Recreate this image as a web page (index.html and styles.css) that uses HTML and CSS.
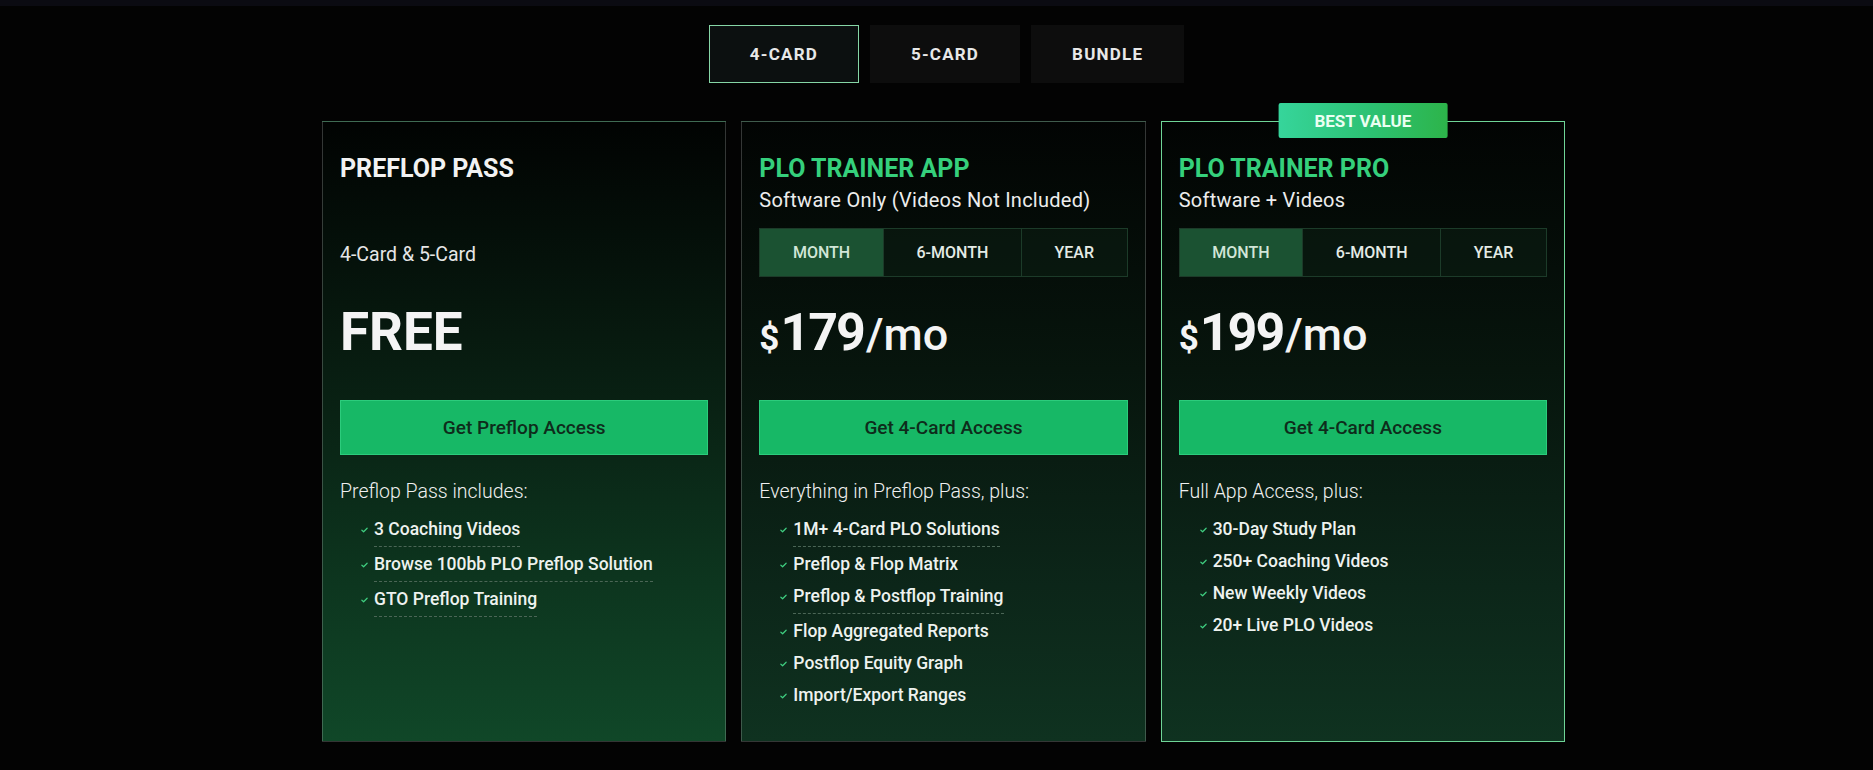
FILE: index.html
```html
<!DOCTYPE html>
<html lang="en">
<head>
<meta charset="utf-8">
<title>Pricing</title>
<link rel="stylesheet" href="styles.css">
</head>
<body>
<div class="topbar"></div>
<main class="page">
  <nav class="tabs">
    <button class="tab active">4-CARD</button>
    <button class="tab">5-CARD</button>
    <button class="tab">BUNDLE</button>
  </nav>

  <section class="plans">
    <article class="card card-free">
      <h2 class="title">PREFLOP PASS</h2>
      <p class="subtitle">&nbsp;</p>
      <div class="slot"><span class="variant">4-Card &amp; 5-Card</span></div>
      <div class="price"><span class="amount free">FREE</span></div>
      <a class="cta" href="#">Get Preflop Access</a>
      <p class="intro">Preflop Pass includes:</p>
      <ul class="features">
        <li><svg class="check" viewBox="0 0 8 6"><path d="M1 3.2 L3 5 L7 1"/></svg><span class="tip">3 Coaching Videos</span></li>
        <li><svg class="check" viewBox="0 0 8 6"><path d="M1 3.2 L3 5 L7 1"/></svg><span class="tip">Browse 100bb PLO Preflop Solution</span></li>
        <li><svg class="check" viewBox="0 0 8 6"><path d="M1 3.2 L3 5 L7 1"/></svg><span class="tip">GTO Preflop Training</span></li>
      </ul>
    </article>

    <article class="card">
      <h2 class="title green">PLO TRAINER APP</h2>
      <p class="subtitle">Software Only (Videos Not Included)</p>
      <div class="slot toggle">
        <span class="seg active">MONTH</span>
        <span class="seg">6-MONTH</span>
        <span class="seg">YEAR</span>
      </div>
      <div class="price"><span class="cur">$</span><span class="amount">179</span><span class="per">/mo</span></div>
      <a class="cta" href="#">Get 4-Card Access</a>
      <p class="intro">Everything in Preflop Pass, plus:</p>
      <ul class="features">
        <li><svg class="check" viewBox="0 0 8 6"><path d="M1 3.2 L3 5 L7 1"/></svg><span class="tip">1M+ 4-Card PLO Solutions</span></li>
        <li><svg class="check" viewBox="0 0 8 6"><path d="M1 3.2 L3 5 L7 1"/></svg><span>Preflop &amp; Flop Matrix</span></li>
        <li><svg class="check" viewBox="0 0 8 6"><path d="M1 3.2 L3 5 L7 1"/></svg><span class="tip">Preflop &amp; Postflop Training</span></li>
        <li><svg class="check" viewBox="0 0 8 6"><path d="M1 3.2 L3 5 L7 1"/></svg><span>Flop Aggregated Reports</span></li>
        <li><svg class="check" viewBox="0 0 8 6"><path d="M1 3.2 L3 5 L7 1"/></svg><span>Postflop Equity Graph</span></li>
        <li><svg class="check" viewBox="0 0 8 6"><path d="M1 3.2 L3 5 L7 1"/></svg><span>Import/Export Ranges</span></li>
      </ul>
    </article>

    <article class="card card-pro">
      <span class="badge">BEST VALUE</span>
      <h2 class="title green">PLO TRAINER PRO</h2>
      <p class="subtitle">Software + Videos</p>
      <div class="slot toggle">
        <span class="seg active">MONTH</span>
        <span class="seg">6-MONTH</span>
        <span class="seg">YEAR</span>
      </div>
      <div class="price"><span class="cur">$</span><span class="amount">199</span><span class="per">/mo</span></div>
      <a class="cta" href="#">Get 4-Card Access</a>
      <p class="intro">Full App Access, plus:</p>
      <ul class="features">
        <li><svg class="check" viewBox="0 0 8 6"><path d="M1 3.2 L3 5 L7 1"/></svg><span>30-Day Study Plan</span></li>
        <li><svg class="check" viewBox="0 0 8 6"><path d="M1 3.2 L3 5 L7 1"/></svg><span>250+ Coaching Videos</span></li>
        <li><svg class="check" viewBox="0 0 8 6"><path d="M1 3.2 L3 5 L7 1"/></svg><span>New Weekly Videos</span></li>
        <li><svg class="check" viewBox="0 0 8 6"><path d="M1 3.2 L3 5 L7 1"/></svg><span>20+ Live PLO Videos</span></li>
      </ul>
    </article>
  </section>
</main>
</body>
</html>
```

FILE: styles.css
```css
* { box-sizing: border-box; }

html, body {
  margin: 0;
  padding: 0;
  background: #030303;
  color: #ececec;
  font-family: Roboto, "Liberation Sans", sans-serif;
}

.topbar {
  height: 6px;
  background: #0b0b12;
}

.page {
  padding-left: 14px;
}

.tabs {
  display: flex;
  justify-content: center;
  gap: 11px;
  margin-top: 19px;
  padding-left: 6px;
}

.tab {
  height: 58px;
  padding: 0 40px;
  background: #0d0d0d;
  border: 1px solid #0d0d0d;
  color: #e8e8e8;
  font-family: Roboto, "Liberation Sans", sans-serif;
  font-size: 17px;
  font-weight: 700;
  letter-spacing: 1.2px;
  cursor: pointer;
}

.tab.active {
  background: #0c1010;
  border-color: #86d6a6;
}

.plans {
  width: 1243px;
  margin: 38px auto 0;
  display: grid;
  grid-template-columns: repeat(3, 1fr);
  gap: 15px;
}

.card {
  position: relative;
  min-height: 621px;
  padding: 32px 17px 34px;
  border: 1px solid rgba(255, 255, 255, 0.2);
  background: linear-gradient(180deg, #020403 0%, #07150d 40%, #0c2619 75%, #0f3220 100%);
}

.card-free {
  background: linear-gradient(180deg, #010302 0%, #081d11 40%, #0d361f 75%, #104728 100%);
}

.card-pro {
  border-color: #6fd597;
}

.badge {
  position: absolute;
  top: -19px;
  left: 50%;
  transform: translateX(-50%);
  height: 35px;
  padding: 0 36px;
  display: flex;
  align-items: center;
  border-radius: 2px;
  background: linear-gradient(90deg, #36d59b 0%, #2cc172 55%, #2db44a 100%);
  color: #eafff2;
  font-size: 17px;
  font-weight: 700;
  white-space: nowrap;
}

.title {
  margin: 0;
  font-size: 25px;
  line-height: 30px;
  font-weight: 700;
  color: #f2f2f2;
}

.title.green { color: #35d07c; }

.subtitle {
  margin: 3px 0 0;
  font-size: 20px;
  line-height: 26px;
  font-weight: 400;
  letter-spacing: 0.25px;
  color: #ededed;
  min-height: 26px;
}

.slot {
  margin-top: 15px;
  height: 49px;
}

.variant {
  display: block;
  padding-top: 15px;
  font-size: 19.5px;
  line-height: 24px;
  color: #e6e6e6;
}

.toggle {
  display: flex;
  border: 1px solid #1c3b29;
  background: rgba(18, 52, 32, 0.25);
}

.seg {
  flex: 1 1 auto;
  display: flex;
  align-items: center;
  justify-content: center;
  padding: 0 30px;
  font-size: 16px;
  font-weight: 500;
  color: #e4ebe6;
  border-left: 1px solid #1c3b29;
}

.seg:first-child { border-left: 0; }

.seg.active {
  background: #1b5232;
  color: #d2e6d8;
}

.price {
  margin-top: 26px;
  height: 60px;
  font-size: 52px;
  line-height: 60px;
  font-weight: 700;
  color: #f4f4f4;
  white-space: nowrap;
}

.price span { line-height: 1; }

.cur {
  font-size: 35px;
  font-weight: 700;
}

.amount {
  letter-spacing: -2px;
  margin-left: 1px;
}

.amount.free {
  letter-spacing: 0;
  margin-left: 0;
  font-size: 53px;
}

.per {
  font-size: 45px;
  font-weight: 500;
  margin-left: 2px;
}

.cta {
  display: flex;
  align-items: center;
  justify-content: center;
  margin-top: 37px;
  height: 55px;
  background: #17b866;
  border: 1px solid #2ccc7c;
  color: #0e2c1b;
  font-size: 19px;
  font-weight: 500;
  text-decoration: none;
}

.intro {
  margin: 25px 0 0;
  font-size: 19.5px;
  line-height: 24px;
  font-weight: 300;
  color: #f0f0f0;
}

.features {
  list-style: none;
  margin: 13px 0 0;
  padding: 0 0 0 21px;
}

.features li {
  display: flex;
  align-items: flex-start;
  font-size: 17.5px;
  line-height: 24px;
  font-weight: 500;
  color: #eef2ef;
  margin-bottom: 8px;
}

.features li:last-child { margin-bottom: 0; }

.check {
  width: 7px;
  height: 6px;
  margin: 10px 6px 0 0;
  flex: none;
  fill: none;
  stroke: #3fcf80;
  stroke-width: 1.4;
  stroke-linecap: round;
  stroke-linejoin: round;
}

.tip {
  display: inline-block;
  padding-bottom: 5px;
  border-bottom: 1px dashed #4b6656;
  margin-bottom: -3px;
}
```
